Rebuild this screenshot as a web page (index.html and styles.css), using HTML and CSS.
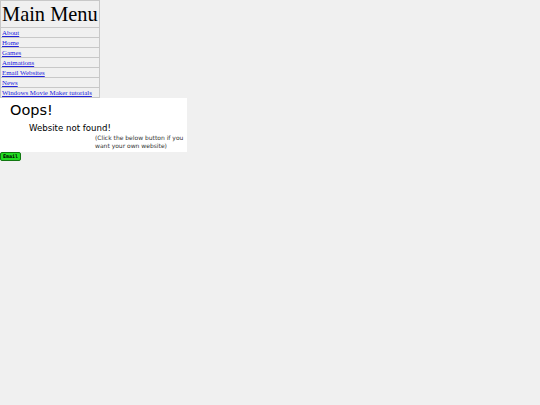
FILE: index.html
```html
<!DOCTYPE html>
<html>
<head>
<meta charset="utf-8">
<link rel="stylesheet" href="styles.css">
</head>
<body>
<table class="menu">
<tr><td class="title">Main Menu</td></tr>
<tr><td><a href="#">About</a></td></tr>
<tr><td><a href="#">Home</a></td></tr>
<tr><td><a href="#">Games</a></td></tr>
<tr><td><a href="#">Animations</a></td></tr>
<tr><td><a href="#">Email Websites</a></td></tr>
<tr><td><a href="#">News</a></td></tr>
<tr><td><a href="#">Windows Movie Maker tutorials</a></td></tr>
</table>
<div class="box">
<div class="oops">Oops!</div>
<div class="notfound">Website not found!</div>
<div class="note">(Click the below button if you<br>want your own website)</div>
</div>
<button class="email">Email</button>
</body>
</html>
```
FILE: styles.css
```css
html, body { margin: 0; padding: 0; background: #f0f0f0; }
body { font-family: "Liberation Serif", serif; }
.menu { border-collapse: collapse; border: 1px solid #c4c4c4; margin: 0; }
.menu td { border: 1px solid #c8c8c8; padding: 0 1px; font-size: 6.9px; line-height: 9px; height: 9px; white-space: nowrap; }
.menu td.title { font-size: 20.4px; line-height: 26px; height: 26px; padding: 0 1px; }
.menu a { color: #2222dd; }
.box { background: #fff; width: 187px; height: 54px; font-family: "DejaVu Sans", sans-serif; }
.oops { font-size: 14.5px; padding: 3px 0 0 10px; line-height: 18px; }
.notfound { font-size: 8.6px; padding: 3px 0 0 29px; line-height: 12px; }
.note { font-size: 6px; padding: 0 0 0 95px; line-height: 8px; color: #333; white-space: nowrap; }
.email { display: block; background: #22dd22; border: 1px solid #117711; border-radius: 2px; font-size: 5px; font-weight: bold; padding: 1px 2px; margin: 0; font-family: "DejaVu Sans Mono", monospace; height: 9px; width: 21px; line-height: 5px; }
```
